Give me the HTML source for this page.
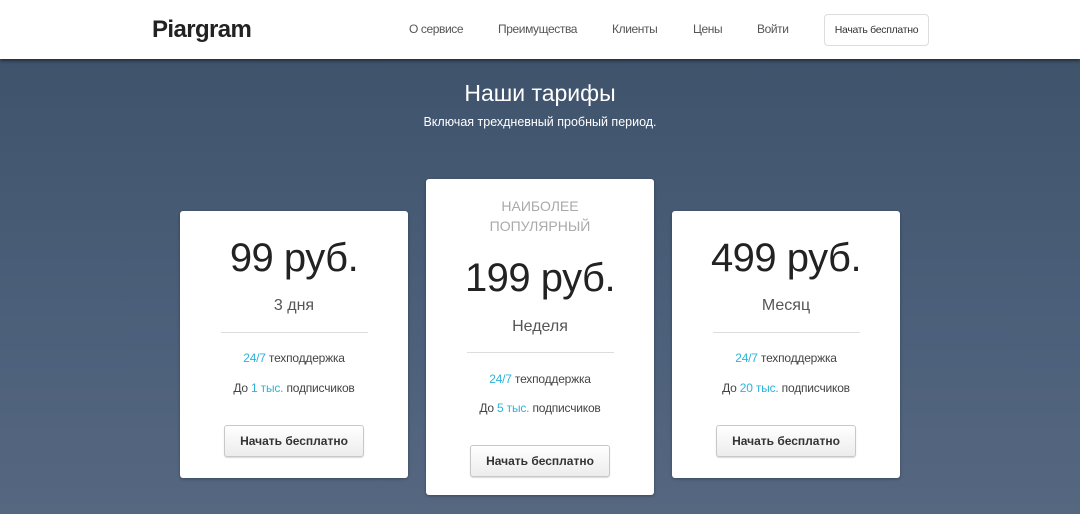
<!DOCTYPE html>
<html><head><meta charset="utf-8"><style>
*{margin:0;padding:0;box-sizing:border-box}
body{width:1080px;height:514px;overflow:hidden;font-family:"Liberation Sans",sans-serif;background:linear-gradient(#3c5068,#4b5f7a 60%,#566780);position:relative}
.hdr{position:absolute;left:0;top:0;width:1080px;height:59px;background:#fff;box-shadow:0 2px 3px rgba(0,0,0,.45)}
.logo{position:absolute;left:152px;top:16px;font-size:24px;font-weight:bold;color:#222;letter-spacing:-0.6px}
.nav{position:absolute;top:22px;font-size:12px;color:#555;letter-spacing:-0.4px}
.hbtn{position:absolute;left:824px;top:14px;width:105px;height:32px;border:1px solid #ddd;border-radius:4px;font-size:10.5px;color:#333;text-align:center;line-height:30px;letter-spacing:-0.3px}
.t{position:absolute;width:1080px;text-align:center;color:#fff}
.card{position:absolute;width:228px;background:#fff;border-radius:3px;text-align:center;box-shadow:0 1px 3px rgba(0,0,0,.3)}
.a{position:absolute;width:100%;left:0}
.price{font-size:40px;color:#222;letter-spacing:-0.5px}
.per{font-size:16px;color:#555}
.hr{position:absolute;left:41px;width:147px;height:1px;background:#ddd}
.f{font-size:12px;color:#444;letter-spacing:-0.2px}
.f b{font-weight:normal;color:#2cb3db}
.btn{position:absolute;left:44px;width:140px;height:32px;border:1px solid #c8c8c8;border-radius:3px;background:linear-gradient(#fff,#ececec);font-size:12px;font-weight:bold;color:#333;line-height:30px;box-shadow:0 1px 1px rgba(0,0,0,.15)}
.pop{font-size:14px;color:#aaa;line-height:20px}
</style></head><body>
<div class="hdr">
<div class="logo">Piargram</div>
<div class="nav" style="left:409px">О сервисе</div>
<div class="nav" style="left:498px">Преимущества</div>
<div class="nav" style="left:612px">Клиенты</div>
<div class="nav" style="left:693px">Цены</div>
<div class="nav" style="left:757px">Войти</div>
<div class="hbtn">Начать бесплатно</div>
</div>
<div class="t" style="top:80px;font-size:23px">Наши тарифы</div>
<div class="t" style="top:115px;font-size:12.5px">Включая трехдневный пробный период.</div>

<div class="card" style="left:180px;top:211px;height:267px">
<div class="a price" style="top:25px">99 руб.</div>
<div class="a per" style="top:86px">3 дня</div>
<div class="hr" style="top:121px"></div>
<div class="a f" style="top:140px"><b>24/7</b> техподдержка</div>
<div class="a f" style="top:170px">До <b>1 тыс.</b> подписчиков</div>
<div class="btn" style="top:214px">Начать бесплатно</div>
</div>

<div class="card" style="left:426px;top:179px;height:316px">
<div class="a pop" style="top:17px">НАИБОЛЕЕ<br>ПОПУЛЯРНЫЙ</div>
<div class="a price" style="top:77px">199 руб.</div>
<div class="a per" style="top:139px">Неделя</div>
<div class="hr" style="top:173px"></div>
<div class="a f" style="top:193px"><b>24/7</b> техподдержка</div>
<div class="a f" style="top:222px">До <b>5 тыс.</b> подписчиков</div>
<div class="btn" style="top:266px">Начать бесплатно</div>
</div>

<div class="card" style="left:672px;top:211px;height:267px">
<div class="a price" style="top:25px">499 руб.</div>
<div class="a per" style="top:86px">Месяц</div>
<div class="hr" style="top:121px"></div>
<div class="a f" style="top:140px"><b>24/7</b> техподдержка</div>
<div class="a f" style="top:170px">До <b>20 тыс.</b> подписчиков</div>
<div class="btn" style="top:214px">Начать бесплатно</div>
</div>
</body></html>
